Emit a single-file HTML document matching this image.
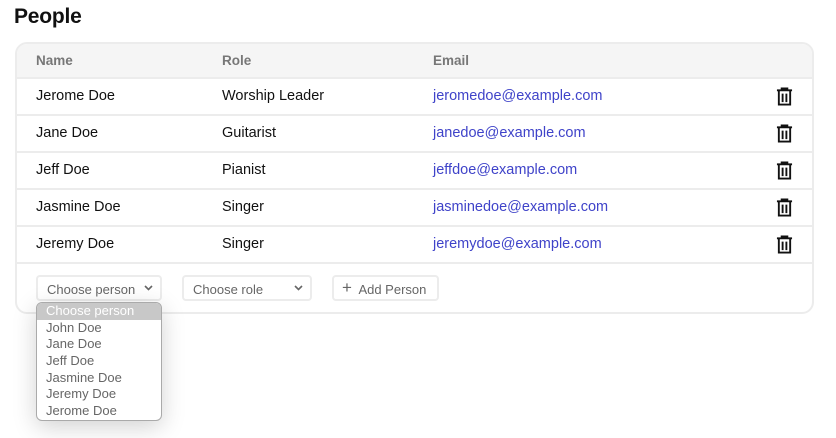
<!DOCTYPE html>
<html><head><style>
*{box-sizing:border-box;margin:0;padding:0}
body{width:836px;height:438px;background:#fff;font-family:"Liberation Sans",sans-serif;position:relative;overflow:hidden;color:#111}
h1{position:absolute;left:14px;top:5px;font-size:21px;font-weight:bold;letter-spacing:-0.2px}
.card{position:absolute;left:15px;top:42px;width:799px;height:272px;border:2px solid #ececec;border-radius:12px;overflow:hidden}
.hdr{height:35px;background:#f5f5f5;border-bottom:2px solid #ececec;position:relative}
.hdr span{position:absolute;top:9px;font-size:13.5px;font-weight:bold;color:#777}
.row{height:37px;border-bottom:2px solid #ececec;position:relative}
.row span{position:absolute;top:9px;font-size:14.5px;font-weight:500}
.c1{left:19px}.c2{left:205px}.c3{left:416px}
.row .c3{color:#3f43c9}
.trash{position:absolute;left:759px;top:8px}
.ctl{position:absolute;top:275px;height:26px;border:2px solid #ececec;border-radius:4px;font-size:13px;color:#666;padding:5px 0 0 9px}
.chev{position:absolute;right:7px;top:7px}
.dd{position:absolute;left:36px;top:302px;width:126px;height:119px;border:1px solid #aaa;border-radius:6px;background:#fff;overflow:hidden;box-shadow:0 6px 24px rgba(0,0,0,.18);font-size:13px;color:#666}
.dd div{height:16.7px;line-height:16.7px;padding-left:9px}
.dd .sel{background:#c8c8c8;color:#fff}
</style></head><body>
<h1>People</h1>
<div class="card">
<div class="hdr"><span style="left:19px">Name</span><span style="left:205px">Role</span><span style="left:416px">Email</span></div>
<div class="row"><span class="c1">Jerome Doe</span><span class="c2">Worship Leader</span><span class="c3">jeromedoe@example.com</span><svg class="trash" width="17" height="19" viewBox="0 0 18 20"><path d="M1 3.5H17M6 3.5V1.5H12V3.5M3 3.5V18.5H15V3.5M7 7V16M11 7V16" fill="none" stroke="#111" stroke-width="2"/></svg></div>
<div class="row"><span class="c1">Jane Doe</span><span class="c2">Guitarist</span><span class="c3">janedoe@example.com</span><svg class="trash" width="17" height="19" viewBox="0 0 18 20"><path d="M1 3.5H17M6 3.5V1.5H12V3.5M3 3.5V18.5H15V3.5M7 7V16M11 7V16" fill="none" stroke="#111" stroke-width="2"/></svg></div>
<div class="row"><span class="c1">Jeff Doe</span><span class="c2">Pianist</span><span class="c3">jeffdoe@example.com</span><svg class="trash" width="17" height="19" viewBox="0 0 18 20"><path d="M1 3.5H17M6 3.5V1.5H12V3.5M3 3.5V18.5H15V3.5M7 7V16M11 7V16" fill="none" stroke="#111" stroke-width="2"/></svg></div>
<div class="row"><span class="c1">Jasmine Doe</span><span class="c2">Singer</span><span class="c3">jasminedoe@example.com</span><svg class="trash" width="17" height="19" viewBox="0 0 18 20"><path d="M1 3.5H17M6 3.5V1.5H12V3.5M3 3.5V18.5H15V3.5M7 7V16M11 7V16" fill="none" stroke="#111" stroke-width="2"/></svg></div>
<div class="row"><span class="c1">Jeremy Doe</span><span class="c2">Singer</span><span class="c3">jeremydoe@example.com</span><svg class="trash" width="17" height="19" viewBox="0 0 18 20"><path d="M1 3.5H17M6 3.5V1.5H12V3.5M3 3.5V18.5H15V3.5M7 7V16M11 7V16" fill="none" stroke="#111" stroke-width="2"/></svg></div>
</div>
<div class="ctl" style="left:36px;width:126px">Choose person<svg class="chev" width="9" height="8" viewBox="0 0 9 8"><path d="M1 2L4.5 5.5L8 2" fill="none" stroke="#666" stroke-width="1.6"/></svg></div>
<div class="ctl" style="left:182px;width:130px">Choose role<svg class="chev" width="9" height="8" viewBox="0 0 9 8"><path d="M1 2L4.5 5.5L8 2" fill="none" stroke="#666" stroke-width="1.6"/></svg></div>
<div class="ctl" style="left:332px;width:107px;padding-left:8px"><span style="font-size:17px;position:relative;top:-1px;line-height:12px">+</span>&nbsp; Add Person</div>
<div class="dd"><div class="sel">Choose person</div><div>John Doe</div><div>Jane Doe</div><div>Jeff Doe</div><div>Jasmine Doe</div><div>Jeremy Doe</div><div>Jerome Doe</div></div>
</body></html>
